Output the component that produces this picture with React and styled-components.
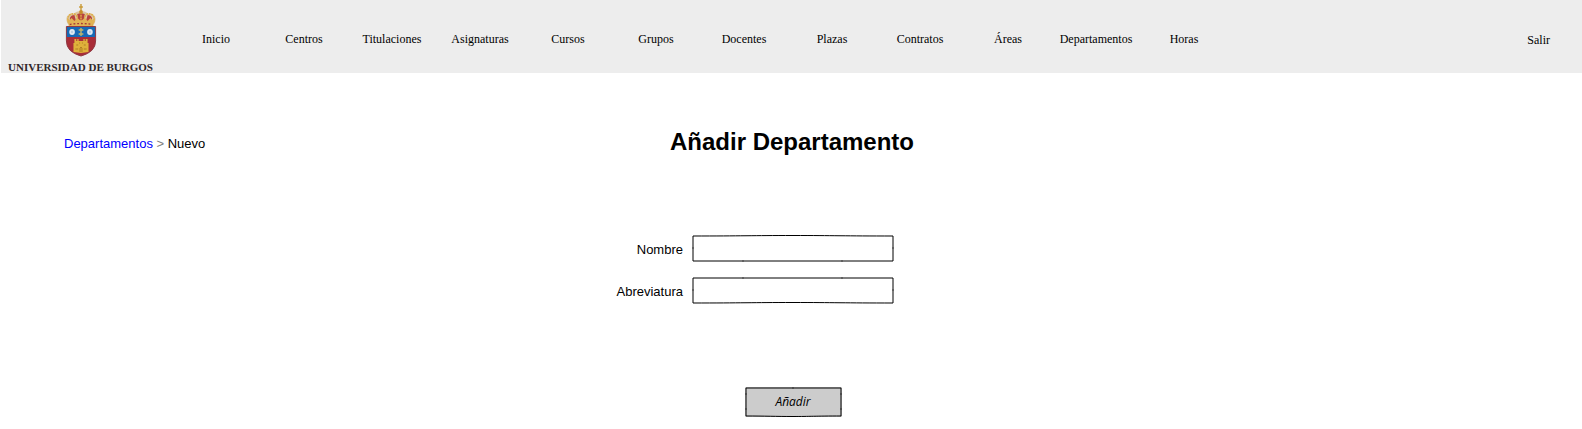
import React from "react";
import styled, { createGlobalStyle } from "styled-components";

const GlobalStyle = createGlobalStyle`
  * { box-sizing: border-box; }
  body {
    margin: 0;
    background: #fff;
    color: #000;
    font-family: "Liberation Sans", Arial, sans-serif;
    font-size: 13px;
    line-height: 16px;
  }
`;

const Header = styled.header`
  display: flex;
  align-items: stretch;
  height: 73px;
  margin-left: 1px;
  padding-right: 32px;
  background: #ededed;
  font: 12px/16px "Liberation Serif", "Times New Roman", serif;
`;

const Brand = styled.a`
  display: flex;
  flex: none;
  flex-direction: column;
  align-items: center;
  width: 159px;
  padding-top: 3px;
  color: #30282a;
  text-decoration: none;
`;

const BrandName = styled.span`
  font-size: 11px;
  font-weight: bold;
  line-height: 12px;
  margin-top: 4px;
  white-space: nowrap;
`;

const Nav = styled.nav`
  display: flex;
  flex: 1;
  align-items: center;
  margin-left: 12px;
  padding-top: 4px;
`;

const NavLink = styled.a`
  width: 88px;
  color: #000;
  text-align: center;
  text-decoration: none;
`;

const ExitLink = styled.a`
  align-self: center;
  padding-top: 6px;
  color: #000;
  text-decoration: none;
`;

const TitleRow = styled.div`
  display: grid;
  grid-template-columns: 1fr auto 1fr;
  align-items: center;
  padding: 55px 62px 0 64px;
`;

const Breadcrumb = styled.nav`
  padding-top: 4px;
`;

const CrumbLink = styled.a`
  color: #0000ff;
  text-decoration: none;
`;

const Separator = styled.span`
  color: #808080;
`;

const Title = styled.h1`
  margin: 0;
  font-size: 24px;
  line-height: 28px;
`;

const Form = styled.form`
  display: flex;
  flex-direction: column;
  align-items: stretch;
  gap: 15px;
  padding: 79px 0 11px 4px;
`;

const Field = styled.div`
  display: grid;
  grid-template-columns: 1fr 202px 1fr;
  column-gap: 9px;
  align-items: center;
`;

const Label = styled.label`
  padding-top: 2px;
  text-align: right;
`;

const Sketched = styled.div`
  position: relative;
  width: ${(p) => p.$width};
  height: ${(p) => p.$height};
`;

const Outline = styled.svg`
  position: absolute;
  inset: 0;
  width: 100%;
  height: 100%;
  overflow: visible;
  pointer-events: none;
  fill: none;
  stroke: #000;
`;

const Input = styled.input`
  display: block;
  width: 100%;
  height: 100%;
  padding: 0 8px;
  border: 0;
  background: #fff;
  font: inherit;
`;

const Actions = styled.div`
  display: flex;
  justify-content: center;
  padding-top: 68px;
`;

const SubmitButton = styled.button`
  display: block;
  width: 100%;
  height: 100%;
  padding: 0;
  border: 0;
  background: #ccc;
  color: #000;
  font: italic 12px/16px "Comic Sans MS", "Open Sans", sans-serif;
`;

function Crest() {
  return (
    <svg width="32" height="54" viewBox="0 0 34 54" preserveAspectRatio="none" aria-hidden="true">
      <path d="M17 1v8M15 4h4" stroke="#c99a36" strokeWidth="1.500" />
      <path d="M3 21C-1 14 4 10 9 11q3-3 8-3t8 3c5-1 10 3 6 10q-14-3-28 0Z" fill="#dcc6a2" />
      <path d="M6 19C4 15 6 12 10 12l2 7Zm22 0c2-4 0-7-4-7l-2 7ZM14 18l-1-7 4-1 4 1-1 7Z" fill="#b8443e" />
      <path d="M4 20C1 14 5 10 10 11q4 1 3 8m17 1c3-6-1-10-6-9q-4 1-3 8M17 9v10" fill="none" stroke="#dfad47" strokeWidth="1.600" strokeDasharray="2 0.700" />
      <circle cx="17" cy="9" r="2" fill="#c78b2a" />
      <path d="M2 15l3 2 2-2 3 3 3-3 4 3 4-3 3 3 3-3 2 2 3-2-2 8H4Z" fill="#e1b354" />
      <path d="M5 21.500q12-2 24 0" fill="none" stroke="#a83936" strokeWidth="1.300" strokeDasharray="2 2" />
      <path d="M1.500 23.500h31V38q0 11-15.500 15Q1.500 49 1.500 38Z" fill="#a92d38" stroke="#8e3841" />
      <path d="M2 24h30v10H2Z" fill="#1769b5" />
      <circle cx="7.500" cy="29" r="3" fill="#dfe9f2" />
      <circle cx="26.500" cy="29" r="3" fill="#dfe9f2" />
      <circle cx="7.500" cy="29" r="1.200" fill="#b9cfe2" />
      <circle cx="26.500" cy="29" r="1.200" fill="#b9cfe2" />
      <path d="M17 25v8M14.500 27h5M14.500 31h5" stroke="#bfb66c" strokeWidth="1.500" />
      <path d="M9 49v-9h1v-4h2v2h1v-2h1.500v2h5v-2H21v2h1v-2h2v4h1v9l-8 1Z" fill="#dfb13b" />
      <path d="M16 49v-4q1-2 2 0v4M12 42h2m6 0h2M15 40h1m2 0h1M11 46h3m6 0h3" fill="none" stroke="#a87520" strokeWidth="0.900" />
    </svg>
  );
}

function SketchedInput({ id, flipped }) {
  const outline = flipped
    ? "M1 1H201M201 1V26M1 1V26M1 26C50 26 60 25.500 101 25.500S152 26 201 26"
    : "M1 26H201M201 1V26M1 1V26M1 1C50 1 60 0.500 101 0.500S152 1 201 1";
  const ticks = flipped ? "M51 0v2M150 0v2" : "M51 25v2M150 25v2";
  return (
    <Sketched $width="100%" $height="27px">
      <Input id={id} name={id} type="text" />
      <Outline viewBox="0 0 202 27" preserveAspectRatio="none" aria-hidden="true">
        <path d={outline} />
        <path d={ticks + "M0 13h2M200 13h2"} strokeOpacity="0.500" />
      </Outline>
    </Sketched>
  );
}

const sections = [
  "Inicio", "Centros", "Titulaciones", "Asignaturas", "Cursos", "Grupos",
  "Docentes", "Plazas", "Contratos", "Áreas", "Departamentos", "Horas",
];

export default function App() {
  return (
    <>
      <GlobalStyle />
      <Header>
        <Brand href="#">
          <Crest />
          <BrandName>UNIVERSIDAD DE BURGOS</BrandName>
        </Brand>
        <Nav>
          {sections.map((name) => (
            <NavLink key={name} href="#">{name}</NavLink>
          ))}
        </Nav>
        <ExitLink href="#">Salir</ExitLink>
      </Header>
      <main>
        <TitleRow>
          <Breadcrumb>
            <CrumbLink href="#">Departamentos</CrumbLink> <Separator>&gt;</Separator> <span>Nuevo</span>
          </Breadcrumb>
          <Title>Añadir Departamento</Title>
        </TitleRow>
        <Form onSubmit={(e) => e.preventDefault()}>
          <Field>
            <Label htmlFor="nombre">Nombre</Label>
            <SketchedInput id="nombre" />
          </Field>
          <Field>
            <Label htmlFor="abreviatura">Abreviatura</Label>
            <SketchedInput id="abreviatura" flipped />
          </Field>
          <Actions>
            <Sketched $width="97px" $height="30px">
              <SubmitButton type="submit">Añadir</SubmitButton>
              <Outline viewBox="0 0 97 30" preserveAspectRatio="none" aria-hidden="true">
                <path d="M1 29V1H96V29C70 29 65 29.500 48 29.500S20 29 1 29" />
                <path d="M48 0v2M0 7h2M95 7h2M0 22h2M95 22h2" strokeOpacity="0.500" />
              </Outline>
            </Sketched>
          </Actions>
        </Form>
      </main>
    </>
  );
}
